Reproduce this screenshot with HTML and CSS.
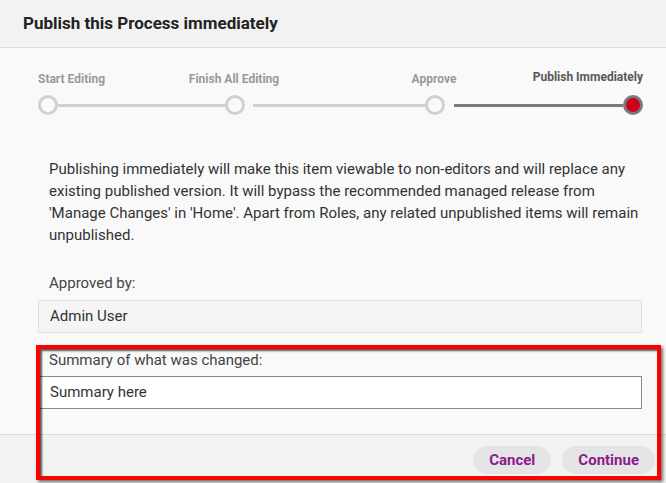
FILE: index.html
```html
<!DOCTYPE html>
<html>
<head>
<meta charset="utf-8">
<link rel="stylesheet" href="styles.css">
</head>
<body>
<div class="dialog">
  <div class="header"><h1 class="title">Publish this Process immediately</h1></div>
  <div class="body">
    <div class="labels">
      <span class="lbl l1">Start Editing</span>
      <span class="lbl l2">Finish All Editing</span>
      <span></span>
      <span class="lbl l3">Approve</span>
      <span class="lbl l4 active">Publish Immediately</span>
    </div>
    <div class="track">
      <span class="dot"></span>
      <span class="line w1"></span>
      <span class="dot"></span>
      <span class="line w2 gapl"></span>
      <span class="dot"></span>
      <span class="line w3 gapl done"></span>
      <span class="dot current"></span>
    </div>
    <p class="desc">Publishing immediately will make this item viewable to non-editors and will replace any existing published version. It will bypass the recommended managed release from 'Manage Changes' in 'Home'. Apart from Roles, any related unpublished items will remain unpublished.</p>
    <div class="field">
      <div class="flabel">Approved by:</div>
      <div class="input readonly">Admin User</div>
    </div>
    <div class="field second">
      <div class="flabel">Summary of what was changed:</div>
      <div class="input editable">Summary here</div>
    </div>
  </div>
  <div class="footer">
    <button class="btn">Cancel</button>
    <button class="btn">Continue</button>
  </div>
  <div class="highlight"></div>
</div>
</body>
</html>
```
FILE: styles.css
```css
* { box-sizing: border-box; }
html, body { margin: 0; padding: 0; }
body {
  font-family: Roboto, "Liberation Sans", sans-serif;
  background: #f9f9f9;
  width: 666px;
  height: 483px;
  overflow: hidden;
}
.dialog {
  position: relative;
  width: 666px;
  height: 483px;
  display: flex;
  flex-direction: column;
  background: #f9f9f9;
}
.header {
  height: 48px;
  background: #f2f2f2;
  border-bottom: 1px solid #dcdcdc;
  padding-left: 23px;
  display: flex;
  align-items: center;
}
.title {
  margin: 0;
  font-size: 17px;
  font-weight: 700;
  color: #222;
  position: relative;
  top: -1px;
}
.body {
  padding: 0 0 0 38px;
  flex: 1;
}
.labels {
  display: grid;
  grid-template-columns: 136px 120px 80px 120px 149px;
  margin-top: 24px;
  height: 14px;
  font-size: 12px;
  font-weight: 700;
  color: #9a9a9a;
  line-height: 14px;
}
.l1 { text-align: left; }
.l2, .l3 { text-align: center; }
.l4 { text-align: right; }
.lbl.active { color: #585858; position: relative; top: -2px; }
.track {
  display: flex;
  align-items: center;
  margin-top: 9px;
  height: 20px;
}
.dot {
  width: 20px;
  height: 20px;
  border-radius: 50%;
  border: 3px solid #d0d0d0;
  background: #fafafa;
  flex: none;
}
.dot.current {
  border-color: #7a7a7a;
  background: #d0021b;
}
.line {
  height: 3px;
  background: #d0d0d0;
  flex: none;
}
.line.done { background: #7a7a7a; }
.w1 { width: 167px; }
.w2 { width: 172px; margin-left: 8px; }
.w3 { width: 169px; margin-left: 9px; }
.desc {
  margin: 43px 25px 0 11px;
  font-size: 15px;
  line-height: 22px;
  color: #333;
}
.field { margin-top: 26px; width: 604px; }
.field.second { margin-top: 16px; }
.flabel {
  padding-left: 11px;
  font-size: 15px;
  line-height: 22px;
  color: #444;
  height: 22px;
}
.input {
  margin-top: 6px;
  height: 33px;
  padding-left: 11px;
  font-size: 15px;
  line-height: 31px;
  color: #333;
}
.readonly { background: #f5f5f5; border: 1px solid #dedede; }
.editable { background: #fff; border: 1px solid #888; margin-top: 5px; }
.footer {
  height: 49px;
  background: #f2f2f2;
  border-top: 1px solid #dcdcdc;
  display: flex;
  justify-content: flex-end;
  align-items: flex-start;
  padding: 11px 11px 0 0;
  gap: 11px;
}
.btn {
  font-family: Roboto, "Liberation Sans", sans-serif;
  font-size: 15px;
  font-weight: 700;
  color: #8b1a8b;
  background: #e5e5e5;
  border: none;
  border-radius: 14px;
  height: 28px;
  padding: 0 16px;
}
.highlight {
  position: absolute;
  left: 36px;
  top: 345px;
  width: 625px;
  height: 135px;
  border: 4px solid #ff0000;
  box-shadow: inset 2px 2px 2px rgba(0,0,0,0.65), 2px 2px 3px rgba(0,0,0,0.55);
  pointer-events: none;
}
```
